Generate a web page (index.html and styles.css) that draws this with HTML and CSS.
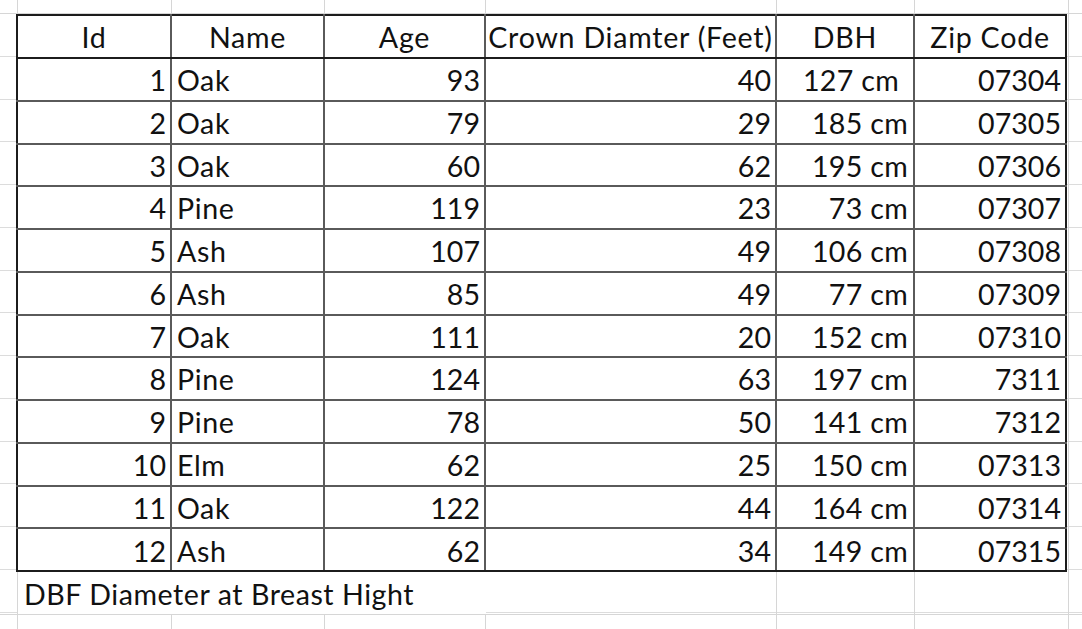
FILE: index.html
```html
<!DOCTYPE html>
<html lang="en">
<head>
<meta charset="utf-8">
<title>Trees</title>
<link rel="stylesheet" href="styles.css">
</head>
<body>
<div class="sheet">
  <table class="trees">
    <colgroup>
      <col class="c-id"><col class="c-name"><col class="c-age"><col class="c-crown"><col class="c-dbh"><col class="c-zip">
    </colgroup>
    <thead>
      <tr><th>Id</th><th>Name</th><th>Age</th><th>Crown Diamter (Feet)</th><th>DBH</th><th>Zip Code</th></tr>
    </thead>
    <tbody>
      <tr><td class="num">1</td><td class="txt">Oak</td><td class="num">93</td><td class="num">40</td><td class="num dbh wide">127 cm</td><td class="num">07304</td></tr>
      <tr><td class="num">2</td><td class="txt">Oak</td><td class="num">79</td><td class="num">29</td><td class="num dbh">185 cm</td><td class="num">07305</td></tr>
      <tr><td class="num">3</td><td class="txt">Oak</td><td class="num">60</td><td class="num">62</td><td class="num dbh">195 cm</td><td class="num">07306</td></tr>
      <tr><td class="num">4</td><td class="txt">Pine</td><td class="num">119</td><td class="num">23</td><td class="num dbh">73 cm</td><td class="num">07307</td></tr>
      <tr><td class="num">5</td><td class="txt">Ash</td><td class="num">107</td><td class="num">49</td><td class="num dbh">106 cm</td><td class="num">07308</td></tr>
      <tr><td class="num">6</td><td class="txt">Ash</td><td class="num">85</td><td class="num">49</td><td class="num dbh">77 cm</td><td class="num">07309</td></tr>
      <tr><td class="num">7</td><td class="txt">Oak</td><td class="num">111</td><td class="num">20</td><td class="num dbh">152 cm</td><td class="num">07310</td></tr>
      <tr><td class="num">8</td><td class="txt">Pine</td><td class="num">124</td><td class="num">63</td><td class="num dbh">197 cm</td><td class="num">7311</td></tr>
      <tr><td class="num">9</td><td class="txt">Pine</td><td class="num">78</td><td class="num">50</td><td class="num dbh">141 cm</td><td class="num">7312</td></tr>
      <tr><td class="num">10</td><td class="txt">Elm</td><td class="num">62</td><td class="num">25</td><td class="num dbh">150 cm</td><td class="num">07313</td></tr>
      <tr><td class="num">11</td><td class="txt">Oak</td><td class="num">122</td><td class="num">44</td><td class="num dbh">164 cm</td><td class="num">07314</td></tr>
      <tr><td class="num">12</td><td class="txt">Ash</td><td class="num">62</td><td class="num">34</td><td class="num dbh">149 cm</td><td class="num">07315</td></tr>
    </tbody>
  </table>
  <div class="note">DBF Diameter at Breast Hight</div>
</div>
</body>
</html>
```

FILE: styles.css
```css
html, body {
  margin: 0;
  padding: 0;
  background: #ffffff;
}

body {
  font-family: Lato, "Open Sans", sans-serif;
  color: #111111;
}

.sheet {
  box-sizing: border-box;
  width: 1082px;
  height: 629px;
  overflow: hidden;
  padding: 14px 0 0 16px;
  background-color: #ffffff;
  background-image:
    linear-gradient(#d6d6d6, #d6d6d6),
    linear-gradient(#d6d6d6, #d6d6d6),
    linear-gradient(#d6d6d6, #d6d6d6),
    linear-gradient(#d6d6d6, #d6d6d6),
    linear-gradient(#d6d6d6, #d6d6d6),
    linear-gradient(#d6d6d6, #d6d6d6),
    linear-gradient(#d6d6d6, #d6d6d6),
    linear-gradient(#d6d6d6, #d6d6d6),
    linear-gradient(#d6d6d6, #d6d6d6),
    repeating-linear-gradient(to bottom, #dcdcdc 0, #dcdcdc 1px, transparent 1px, transparent 42.77px);
  background-repeat: no-repeat, no-repeat, no-repeat, no-repeat, no-repeat, no-repeat, no-repeat, no-repeat, no-repeat, repeat;
  background-size: 1px 100%, 1px 100%, 1px 100%, 1px 100%, 1px 100%, 1px 100%, 1px 100%, 100% 1px, 100% 1px, 100% 100%;
  background-position: 17px 0, 171px 0, 324px 0, 485px 0, 776px 0, 914px 0, 1068px 0, 0 614px, 0 13px, 0 13px;
}

.trees {
  border-collapse: collapse;
  table-layout: fixed;
  width: 1051px;
  background: #ffffff;
  font-size: 28.6px;
}

.c-id { width: 154px; }
.c-name { width: 153px; }
.c-age { width: 161px; }
.c-crown { width: 291px; }
.c-dbh { width: 138px; }
.c-zip { width: 152px; }

.trees th,
.trees td {
  border: 2px solid #5a5a5a;
  padding: 2px 4px 0;
  line-height: 1;
  white-space: nowrap;
  overflow: hidden;
  vertical-align: middle;
}

.trees thead tr { height: 43px; }
.trees tbody tr { height: 42.77px; }

.trees th {
  font-weight: normal;
  text-align: center;
  letter-spacing: 0.75px;
  padding: 2px 2px 0;
  border-top-color: #1c1c1c;
  border-bottom-color: #1c1c1c;
}

.trees th:first-child,
.trees td:first-child { border-left-color: #1c1c1c; }
.trees th:last-child,
.trees td:last-child { border-right-color: #1c1c1c; }
.trees tbody tr:last-child td { border-bottom-color: #1c1c1c; }

.num { text-align: right; }
.trees .txt { text-align: left; padding-left: 5px; letter-spacing: 0.6px; }
.trees .dbh { padding-right: 5px; letter-spacing: 0.3px; }
.trees .dbh.wide { padding-right: 14px; }

.note {
  box-sizing: border-box;
  width: 468px;
  height: 42px;
  margin-left: 2px;
  padding: 1px 0 0 6px;
  background: #ffffff;
  font-size: 28.6px;
  letter-spacing: 0.55px;
  line-height: 42px;
  white-space: nowrap;
}
```
